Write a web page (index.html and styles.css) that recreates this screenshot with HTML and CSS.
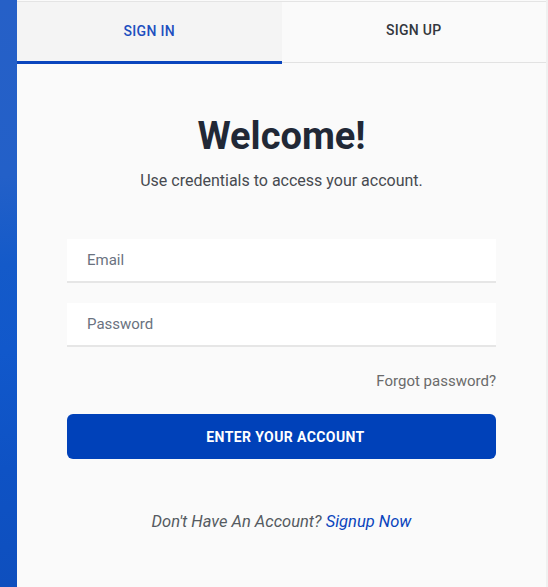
FILE: index.html
```html
<!DOCTYPE html>
<html lang="en">
<head>
<meta charset="utf-8">
<title>Sign in</title>
<link rel="stylesheet" href="styles.css">
</head>
<body>
<div class="page">
  <div class="strip"></div>
  <main class="card">
    <nav class="tabs">
      <div class="tab tab-active">SIGN IN</div>
      <div class="tab">SIGN UP</div>
    </nav>
    <section class="form">
      <h1 class="title">Welcome!</h1>
      <p class="subtitle">Use credentials to access your account.</p>
      <div class="field"><input class="input" type="text" placeholder="Email"></div>
      <div class="field field-gap"><input class="input" type="password" placeholder="Password"></div>
      <div class="forgot">Forgot password?</div>
      <button class="btn" type="button">ENTER YOUR ACCOUNT</button>
      <p class="signup">Don't Have An Account? <a class="signup-link" href="#">Signup Now</a></p>
    </section>
  </main>
  <div class="edge"></div>
</div>
</body>
</html>
```
FILE: styles.css
```css
* { box-sizing: border-box; }
html, body { margin: 0; padding: 0; }
body {
  font-family: Roboto, "Liberation Sans", Arial, sans-serif;
  background: #fafafa;
  width: 548px;
  height: 587px;
  overflow: hidden;
}
.page {
  display: flex;
  height: 587px;
}
.strip {
  width: 17px;
  flex: none;
  background: linear-gradient(180deg, #2660c7 0%, #2360c8 30%, #145ac9 45%, #1158cb 60%, #0e52c4 80%, #0e4fbe 100%);
}
.card {
  width: 529px;
  flex: none;
  background: #fafafa;
  border-top: 1px solid #e4e4e4;
  margin-top: 1px;
  display: flex;
  flex-direction: column;
}
.edge {
  flex: 1;
  background: #f0f0f0;
}
.tabs {
  display: flex;
  height: 62px;
}
.tab {
  flex: 1;
  display: flex;
  align-items: center;
  justify-content: center;
  padding-bottom: 4px;
  font-size: 14px;
  font-weight: 500;
  letter-spacing: 0.3px;
  color: #33373d;
  border-bottom: 1px solid #e2e2e2;
  background: #fafafa;
  height: 61px;
}
.tab-active {
  background: #f4f4f4;
  color: #1d4fbf;
  border-bottom: 3px solid #0a45bd;
  padding-bottom: 2px;
  margin-bottom: -2px;
  height: 62px;
}
.form {
  padding: 0 50px 0 50px;
  display: flex;
  flex-direction: column;
}
.title {
  margin: 50px 0 0 0;
  font-size: 38px;
  line-height: 44px;
  font-weight: 700;
  color: #212836;
  text-align: center;
}
.subtitle {
  margin: 13px 0 0 0;
  font-size: 16px;
  line-height: 20px;
  color: #474a50;
  text-align: center;
}
.field { margin-top: 48px; }
.field-gap { margin-top: 20px; }
.input {
  display: block;
  width: 100%;
  height: 44px;
  border: none;
  border-bottom: 2px solid #e6e6e6;
  background: #ffffff;
  padding: 0 20px;
  font-family: inherit;
  font-size: 15px;
  color: #333;
  outline: none;
}
.input::placeholder { color: #6a7280; }
.forgot {
  margin-top: 24px;
  text-align: right;
  font-size: 15px;
  line-height: 20px;
  color: #6a6a6a;
}
.btn {
  margin-top: 23px;
  height: 45px;
  width: 100%;
  border: none;
  border-radius: 6px;
  background: #0041b9;
  color: #ffffff;
  padding: 0 0 0 8px;
  font-family: inherit;
  font-size: 14px;
  font-weight: 700;
  letter-spacing: 0.4px;
}
.signup {
  margin: 53px 0 0 0;
  text-align: center;
  font-size: 16.5px;
  line-height: 20px;
  font-style: italic;
  color: #555a61;
}
.signup-link {
  color: #0a45bd;
  text-decoration: none;
}
```
